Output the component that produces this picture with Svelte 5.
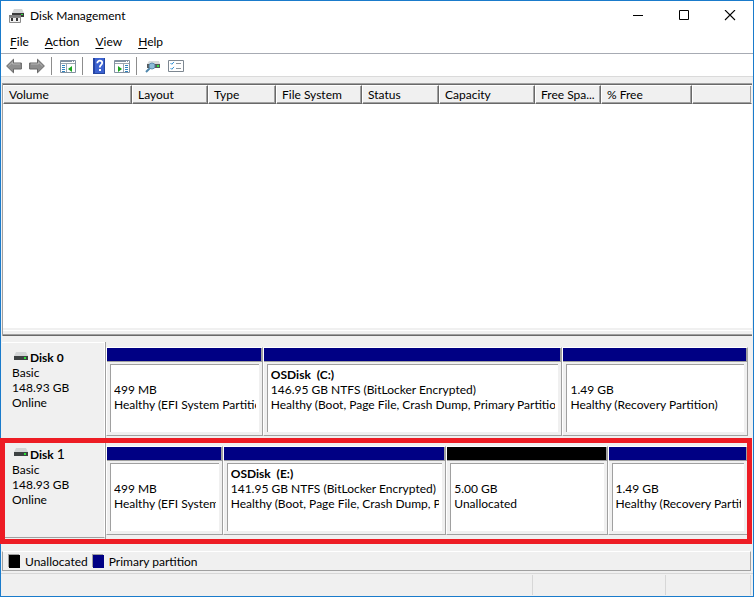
<script>
  const menus = ["File", "Action", "View", "Help"];

  const columns = [
    { name: "Volume", width: 129 },
    { name: "Layout", width: 76 },
    { name: "Type", width: 68 },
    { name: "File System", width: 86 },
    { name: "Status", width: 77 },
    { name: "Capacity", width: 96 },
    { name: "Free Space", short: "Free Spa...", width: 66 },
    { name: "% Free", width: 91 },
    { name: "", width: null },
  ];

  const disks = [
    {
      id: 0,
      type: "Basic",
      size: "148.93 GB",
      state: "Online",
      partitions: [
        { size: "499 MB", status: "Healthy (EFI System Partition)", share: 156 },
        { name: "OSDisk  (C:)", size: "146.95 GB NTFS (BitLocker Encrypted)", status: "Healthy (Boot, Page File, Crash Dump, Primary Partition)", share: 300 },
        { size: "1.49 GB", status: "Healthy (Recovery Partition)", share: 185 },
      ],
    },
    {
      id: 1,
      type: "Basic",
      size: "148.93 GB",
      state: "Online",
      marked: true,
      partitions: [
        { size: "499 MB", status: "Healthy (EFI System Partition)", share: 116 },
        { name: "OSDisk  (E:)", size: "141.95 GB NTFS (BitLocker Encrypted)", status: "Healthy (Boot, Page File, Crash Dump, Primary Partition)", share: 224 },
        { size: "5.00 GB", status: "Unallocated", free: true, share: 161 },
        { size: "1.49 GB", status: "Healthy (Recovery Partition)", share: 140 },
      ],
    },
  ];
</script>

<div class="window">
  <header class="titlebar">
    <svg class="app-icon" viewBox="0 0 16 16" width="16" height="16" aria-hidden="true">
      <path d="M5 1h8l2 4H3z" fill="#d3d5d6" />
      <path d="M3 5h12v4H3z" fill="#3b3b3b" />
      <path d="M12 6h2v1h-2z" fill="#2fdc3c" />
      <path d="M0 7h12v3H0z" fill="#808080" />
      <path d="M.5 9.5h11v5H.5z" fill="#f1f1f1" stroke="#8a8a8a" />
      <path d="M2 10h2v3H2zM7 10h2v3H7z" fill="#333" />
    </svg>
    <h1>Disk Management</h1>
    <div class="caption">
      <button aria-label="Minimize">
        <svg viewBox="0 0 12 12" width="12" height="12"><path d="M1 5.5h10" stroke="#000" /></svg>
      </button>
      <button aria-label="Maximize">
        <svg viewBox="0 0 12 12" width="12" height="12"><path d="M1.5 .5h9v9h-9z" fill="none" stroke="#000" /></svg>
      </button>
      <button aria-label="Close">
        <svg viewBox="0 0 12 12" width="12" height="12"><path d="M1 0l10 10M11 0L1 10" stroke="#000" stroke-width="1.1" /></svg>
      </button>
    </div>
  </header>

  <nav class="menubar">
    {#each menus as menu (menu)}
      <button><u>{menu[0]}</u>{menu.slice(1)}</button>
    {/each}
  </nav>

  <div class="toolbar" role="toolbar" aria-label="Tools">
    <button aria-label="Back">
      <svg viewBox="0 0 16 16" width="16" height="16">
        <path d="M.6 8L7.5 1.2V5h7.9v6H7.5v3.8z" fill="#8e8e8e" stroke="#686868" />
        <path d="M2.5 8l4-3.8V6h7.5" fill="none" stroke="#b5b5b5" />
      </svg>
    </button>
    <button aria-label="Forward">
      <svg viewBox="0 0 16 16" width="16" height="16">
        <path d="M15.4 8L8.5 1.2V5H.6v6h7.9v3.8z" fill="#8e8e8e" stroke="#686868" />
        <path d="M2 6h7.5V4.2l4 3.8" fill="none" stroke="#b5b5b5" />
      </svg>
    </button>
    <span class="sep"></span>
    <button aria-label="Show or hide console tree">
      <svg viewBox="0 0 16 16" width="16" height="16">
        <path d="M.5 2.5h15v12H.5z" fill="#fff" stroke="#8291a1" />
        <path d="M1 3h14v1H1z" fill="#8291a1" />
        <path d="M12 3h1v1h-1zM14 3h1v1h-1z" fill="#fff" />
        <path d="M1 5.5h14M6.5 6v8" stroke="#9aa5b0" />
        <path d="M2 7.5h3M2 9.5h3M2 11.5h3M2 13.5h3" stroke="#2f83bf" />
        <path d="M12 8v6l-4-3z" fill="#18a51d" />
      </svg>
    </button>
    <span class="sep"></span>
    <button aria-label="Help">
      <svg viewBox="0 0 16 16" width="16" height="16">
        <path d="M2 0h12v16H2z" fill="#3c62d0" />
        <path d="M2 0h2v16H2z" fill="#2645a4" />
        <path d="M13 0h1v16h-1zM4 15h10v1H4z" fill="#26479f" />
        <path d="M6.3 5.2C6.3 1.8 11.5 2 11.2 5c-.2 2-2.4 2.1-2.4 4.6" fill="none" stroke="#fff" stroke-width="1.8" />
        <path d="M8 11h2v2H8z" fill="#fff" />
      </svg>
    </button>
    <button aria-label="Show or hide action pane">
      <svg viewBox="0 0 16 16" width="16" height="16">
        <path d="M.5 2.5h15v12H.5z" fill="#fff" stroke="#8291a1" />
        <path d="M1 3h14v1H1z" fill="#8291a1" />
        <path d="M12 3h1v1h-1zM14 3h1v1h-1z" fill="#fff" />
        <path d="M1 5.5h14M9.5 6v8" stroke="#9aa5b0" />
        <path d="M11 7.5h3M11 9.5h3M11 11.5h3M11 13.5h3" stroke="#2f83bf" />
        <path d="M4 8v6l4-3z" fill="#18a51d" />
      </svg>
    </button>
    <span class="sep"></span>
    <button aria-label="Rescan disks">
      <svg viewBox="0 0 16 16" width="16" height="16">
        <path d="M4 3h10l1 3H2z" fill="#d8dbdc" />
        <path d="M2 6h13v4H2z" fill="#55595b" />
        <path d="M12 7h2v2h-2z" fill="#35e23f" />
        <path d="M5 10L1 14" stroke="#4f87ac" stroke-width="2" />
        <circle cx="7" cy="8" r="3" fill="#8dbcd8" stroke="#5c8dae" />
      </svg>
    </button>
    <button aria-label="Properties">
      <svg viewBox="0 0 16 16" width="16" height="16">
        <path d="M.5 2.5h15v11H.5z" fill="#fff" stroke="#7d8791" />
        <path d="M2.5 5l1.3 1.3L6 3.9M2.5 10l1.3 1.3L6 8.9" fill="none" stroke="#2f90d6" />
        <path d="M8 5.5h5M8 10.5h5" stroke="#8d969e" />
      </svg>
    </button>
  </div>

  <main>
    <section class="volumes" aria-label="Volumes">
      <table>
        <colgroup>
          {#each columns as column (column.name)}
            <col style:width={column.width ? `${column.width}px` : null} />
          {/each}
        </colgroup>
        <thead>
          <tr>
            {#each columns as column (column.name)}
              <th scope="col">{column.short ?? column.name}</th>
            {/each}
          </tr>
        </thead>
      </table>
    </section>

    <section class="disks" aria-label="Disks">
      {#each disks as disk (disk.id)}
        <div class="disk" class:marked={disk.marked}>
          <div class="disk-info">
            <h2>
              <svg viewBox="0 0 14 9" width="14" height="9" aria-hidden="true">
                <path d="M2 0h10l2 4H0z" fill="#d3d5d6" />
                <path d="M0 4h14v4H0z" fill="#3d4142" />
                <path d="M10 5h2v2h-2z" fill="#2be336" />
              </svg>
              <span>Disk <span class="number">{disk.id}</span></span>
            </h2>
            <p>{disk.type}</p>
            <p>{disk.size}</p>
            <p>{disk.state}</p>
          </div>
          <div class="partitions">
            {#each disk.partitions as part}
              <div class="partition" style:flex-grow={part.share}>
                <div class="cap" class:free={part.free}></div>
                <div class="body">
                  <strong>{part.name ?? ""}</strong>
                  <p>{part.size}</p>
                  <p>{part.status}</p>
                </div>
              </div>
            {/each}
          </div>
        </div>
      {/each}
    </section>

    <div class="legend">
      <span class="swatch free"></span>
      <span>Unallocated</span>
      <span class="swatch"></span>
      <span>Primary partition</span>
    </div>
  </main>

  <footer class="statusbar">
    <span></span>
    <span></span>
    <span></span>
  </footer>
</div>

<style>
  :global(body) { margin: 0; }
  .window {
    display: flex;
    flex-direction: column;
    box-sizing: border-box;
    min-height: 100vh;
    border: 1px solid #1a7bcb;
    background: #f0f0f0;
    color: #000;
    font: 12px/15px "Segoe UI", Lato, "Open Sans", sans-serif;
  }
  h1, h2, p { margin: 0; font-size: inherit; }
  h1 { font-weight: 400; }
  button {
    padding: 0;
    border: 0;
    background: none;
    color: inherit;
    font: inherit;
  }
  svg { display: block; }
  .titlebar {
    display: flex;
    align-items: center;
    height: 29px;
    padding-left: 8px;
    background: #fff;
  }
  .app-icon { margin-right: 5px; }
  .caption {
    display: flex;
    align-self: stretch;
    margin-left: auto;
  }
  .caption button {
    display: grid;
    place-items: center;
    width: 46px;
  }
  .menubar {
    display: flex;
    height: 23px;
    padding-left: 1px;
    border-bottom: 1px solid #a7abb3;
    background: #fff;
  }
  .menubar button { padding: 0 8px; }
  .menubar u { text-underline-offset: 2px; }
  .toolbar {
    display: flex;
    align-items: center;
    gap: 7px;
    box-sizing: border-box;
    height: 23px;
    padding: 2px 5px 0;
    border-bottom: 1px solid #dadada;
    background: #fff;
  }
  .toolbar .sep {
    width: 1px;
    height: 18px;
    margin: 0 1px 0 -1px;
    background: #8d8d8d;
  }
  main {
    display: flex;
    flex: 1;
    flex-direction: column;
    margin: 6px 1px 0;
  }
  .volumes {
    flex: 1;
    min-height: 120px;
    border-top: 1px solid #a0a0a0;
    border-left: 1px solid #a0a0a0;
    background: #fff;
    box-shadow: inset 0 -1px #696969, inset 0 -2px #a0a0a0, inset 0 -5px #f0f0f0, inset 0 -6px #fff, inset 0 -8px #f0f0f0;
  }
  table {
    width: 100%;
    border-top: 1px solid #696969;
    border-spacing: 0;
    table-layout: fixed;
  }
  th {
    box-sizing: border-box;
    height: 19px;
    padding: 0 0 0 5px;
    border: 1px solid;
    border-color: #fff #696969 #696969 #fff;
    background: #f0f0f0;
    box-shadow: inset -1px -1px #a0a0a0;
    font-weight: 400;
    text-align: left;
    white-space: nowrap;
  }
  th:last-child { border-right-color: #f0f0f0; }
  .disks { padding-top: 6px; }
  .disk {
    display: flex;
    position: relative;
    height: 96px;
  }
  .disk-info {
    box-sizing: border-box;
    flex: none;
    width: 103px;
    padding: 7px 0 0 10px;
    border-top: 1px solid #fff;
    border-right: 1px solid #fff;
  }
  .disk-info h2 {
    display: flex;
    gap: 2px;
    padding-left: 2px;
  }
  .disk-info h2 svg { margin-top: 2px; }
  .partitions {
    display: flex;
    flex: 1;
    min-width: 0;
    margin-right: 4px;
    padding-top: 5px;
    border-left: 1px solid #a0a0a0;
  }
  .partition {
    display: flex;
    flex: 1 1 0;
    flex-direction: column;
    box-sizing: border-box;
    min-width: 0;
    height: 89px;
    border: 1px solid;
    border-color: #fff #a0a0a0 #a0a0a0 #fff;
  }
  .cap {
    flex: none;
    height: 13px;
    border-right: 1px solid #a0a0a0;
    border-bottom: 1px solid #a0a0a0;
    background: #000084;
  }
  .cap.free { background: #000; }
  .body {
    flex: 1;
    min-height: 0;
    margin: 2px 3px 3px;
    padding: 2px 3px 0;
    border-top: 1px solid #a0a0a0;
    border-left: 1px solid #a0a0a0;
    background: #fff;
  }
  .body p,
  .body strong {
    display: block;
    overflow: hidden;
    min-height: 15px;
    white-space: pre;
  }
  .marked { height: 106px; }
  .marked .disk-info {
    margin-bottom: 6px;
    border-bottom: 1px solid #a0a0a0;
  }
  .marked .partitions { padding-top: 8px; }
  .marked .number {
    font-size: 14px;
    font-weight: 400;
  }
  .marked::after {
    content: "";
    position: absolute;
    inset: 0 0 0 -2px;
    border: 5px solid #ed1c24;
  }
  .legend {
    display: flex;
    align-items: center;
    gap: 5px;
    height: 18px;
    margin: 7px 1px 2px 0;
    padding-left: 6px;
    border: 1px solid;
    border-color: #fff #a0a0a0 #a0a0a0;
  }
  .swatch {
    width: 11px;
    height: 13px;
    background: #000084;
    box-shadow: -1px -1px #a0a0a0;
  }
  .swatch.free { background: #000; }
  .statusbar {
    display: grid;
    grid-template-columns: 1fr 133px 85px;
    height: 20px;
    padding: 1px 2px 1px 0;
    border-top: 1px solid #d7d7d7;
  }
  .statusbar span { border-right: 1px solid #d7d7d7; }
</style>
